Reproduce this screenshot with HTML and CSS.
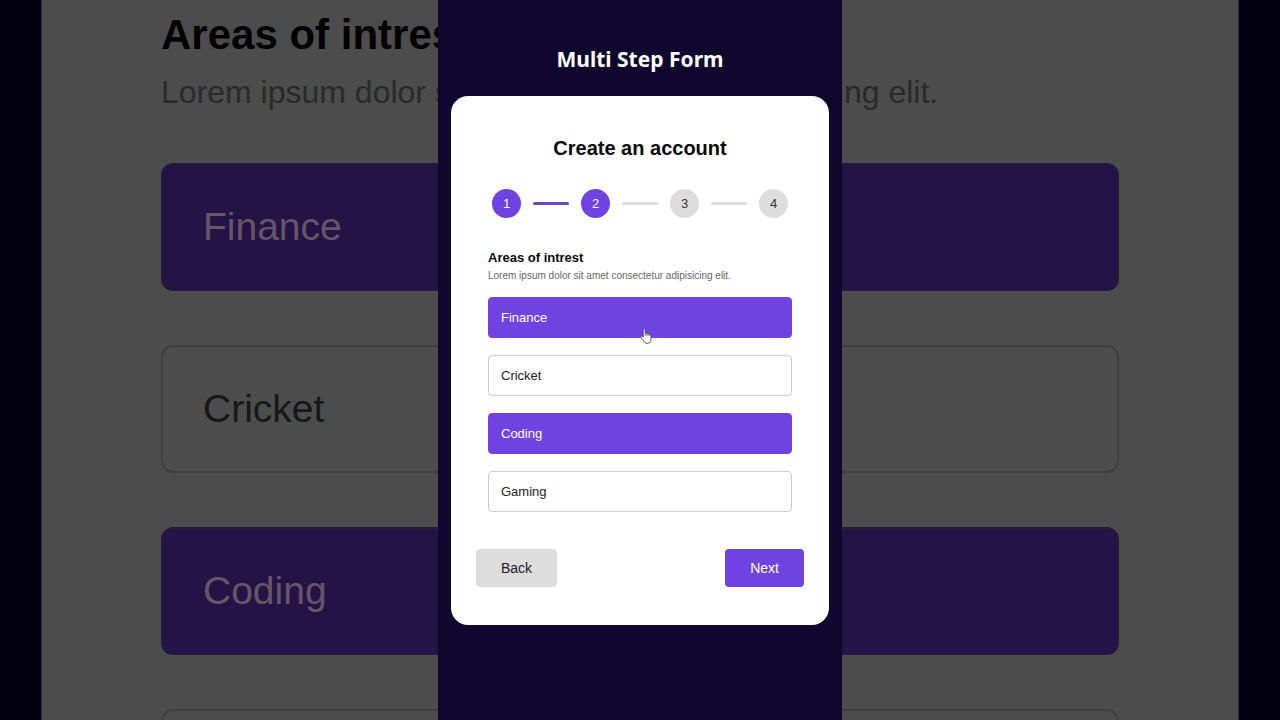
FILE: index.html
```html
<!DOCTYPE html>
<html lang="en">
<head>
<meta charset="UTF-8">
<meta name="viewport" content="width=device-width, initial-scale=1.0">
<title>Multi Step Form</title>
<link rel="stylesheet" href="styles.css">
</head>
<body>
    <div class="backdrop" aria-hidden="true">
        <div class="backdrop-card">
            <div class="backdrop-title">Areas of intrest</div>
            <div class="backdrop-text">Lorem ipsum dolor sit amet consectetur adipisicing elit.</div>
            <div class="backdrop-options">
                <div class="backdrop-option selected">Finance</div>
                <div class="backdrop-option">Cricket</div>
                <div class="backdrop-option selected">Coding</div>
                <div class="backdrop-option"></div>
            </div>
        </div>
    </div>

    <main class="stage">
        <h1>Multi Step Form</h1>
        <form class="card">
            <h2>Create an account</h2>
            <div class="steps">
                <span class="step active">1</span>
                <span class="line active"></span>
                <span class="step active">2</span>
                <span class="line"></span>
                <span class="step">3</span>
                <span class="line"></span>
                <span class="step">4</span>
            </div>
            <div class="panel">
                <h3>Areas of intrest</h3>
                <p>Lorem ipsum dolor sit amet consectetur adipisicing elit.</p>
                <div class="options">
                    <label class="option"><input type="checkbox" name="interest" value="finance" checked>Finance
                        <svg class="cursor" viewBox="0 0 12 16" width="12" height="16" aria-hidden="true">
                            <path d="M3.2 9.2V1.7Q3.2.6 4.2.6T5.2 1.7V5.2Q6.5 4.6 7 5.7Q8.3 5.2 8.8 6.3Q11 6 11 8V11Q11 15.3 7 15.3Q4.8 15.3 3.7 13.2L1 9.7Q.3 8.4 1.3 8Q2.2 7.8 3.2 9.2Z" fill="#fff" stroke="#333" stroke-width=".8"/>
                            <path d="M5.2 5.3V8M7 5.8V8M8.8 6.4V8" stroke="#333" stroke-width=".7"/>
                        </svg>
                    </label>
                    <label class="option"><input type="checkbox" name="interest" value="cricket">Cricket</label>
                    <label class="option"><input type="checkbox" name="interest" value="coding" checked>Coding</label>
                    <label class="option"><input type="checkbox" name="interest" value="gaming">Gaming</label>
                </div>
            </div>
            <div class="buttons">
                <button type="button" class="back">Back</button>
                <button type="button" class="next">Next</button>
            </div>
        </form>
    </main>
</body>
</html>
```

FILE: styles.css
```css
* {
    box-sizing: border-box;
}
body {
    margin: 0;
    min-height: 100vh;
    display: flex;
    justify-content: center;
    background: #020010;
    font-family: "Liberation Sans", Arial, sans-serif;
    position: relative;
    overflow: hidden;
}
h1, h2, h3, p {
    margin: 0;
}

/* enlarged, dimmed form behind the main column */
.backdrop {
    position: absolute;
    inset: 0;
    padding: 0 41px;
    overflow: hidden;
}
.backdrop-card {
    min-height: 100%;
    padding: 8px 119px 0;
    background: #4c4c4c;
    border: solid #2c2c34;
    border-width: 0 1px;
}
.backdrop-title {
    font-size: 42px;
    line-height: 54px;
    font-weight: bold;
    color: #020202;
}
.backdrop-text {
    font-size: 32px;
    line-height: 60px;
    color: #2a2a2a;
}
.backdrop-options {
    display: grid;
    gap: 54px;
    margin-top: 41px;
}
.backdrop-option {
    height: 128px;
    padding: 0 40px;
    border: 2px solid #3f3f3f;
    border-radius: 12px;
    font-size: 39px;
    line-height: 124px;
    color: #161818;
}
.backdrop-option.selected {
    background: #231445;
    border-color: #231a40;
    color: #665568;
}

.stage {
    position: relative;
    width: 100%;
    max-width: 404px;
    min-height: 100vh;
    padding: 43px 13px 0;
    background: #10072f;
}
h1 {
    margin-bottom: 21px;
    text-align: center;
    color: #fff;
    font: bold 21px/32px "Noto Sans", sans-serif;
}
.card {
    padding: 38px 25px;
    background: #fff;
    border-radius: 17px;
}
h2 {
    text-align: center;
    font-size: 20px;
    line-height: 28px;
    color: #0a0a0a;
}
.steps {
    display: flex;
    align-items: center;
    gap: 12px;
    margin: 27px 16px 30px;
}
.step {
    width: 29px;
    height: 29px;
    border-radius: 50%;
    background: #ddd;
    color: #333;
    font-size: 13px;
    line-height: 29px;
    text-align: center;
}
.line {
    flex: 1;
    height: 3px;
    border-radius: 2px;
    background: #ddd;
}
.step.active {
    background: #6f42e2;
    color: #fff;
}
.line.active {
    background: #6848c8;
}
.panel {
    padding: 0 12px;
}
h3 {
    font-size: 13px;
    line-height: 19px;
    color: #0a0a0a;
}
p {
    font-size: 10px;
    line-height: 18px;
    color: #666;
}
.options {
    display: grid;
    gap: 17px;
    margin-top: 12px;
}
.option {
    position: relative;
    height: 41px;
    padding: 0 12px;
    border: 1px solid #ccc;
    border-radius: 4px;
    font-size: 13px;
    line-height: 39px;
    color: #222;
    cursor: pointer;
}
.option input {
    position: absolute;
    opacity: 0;
    pointer-events: none;
}
.option:has(input:checked) {
    background: #7042e2;
    border-color: #7042e2;
    color: #fff;
}
.cursor {
    position: absolute;
    left: 50%;
    bottom: -7px;
}
.buttons {
    display: flex;
    justify-content: space-between;
    margin-top: 37px;
}
button {
    padding: 0 25px;
    border: none;
    border-radius: 4px;
    font-family: inherit;
    font-size: 14px;
    line-height: 38px;
    cursor: pointer;
}
.back {
    background: #ddd;
    color: #222;
}
.next {
    background: #7042e2;
    color: #fff;
}
```
